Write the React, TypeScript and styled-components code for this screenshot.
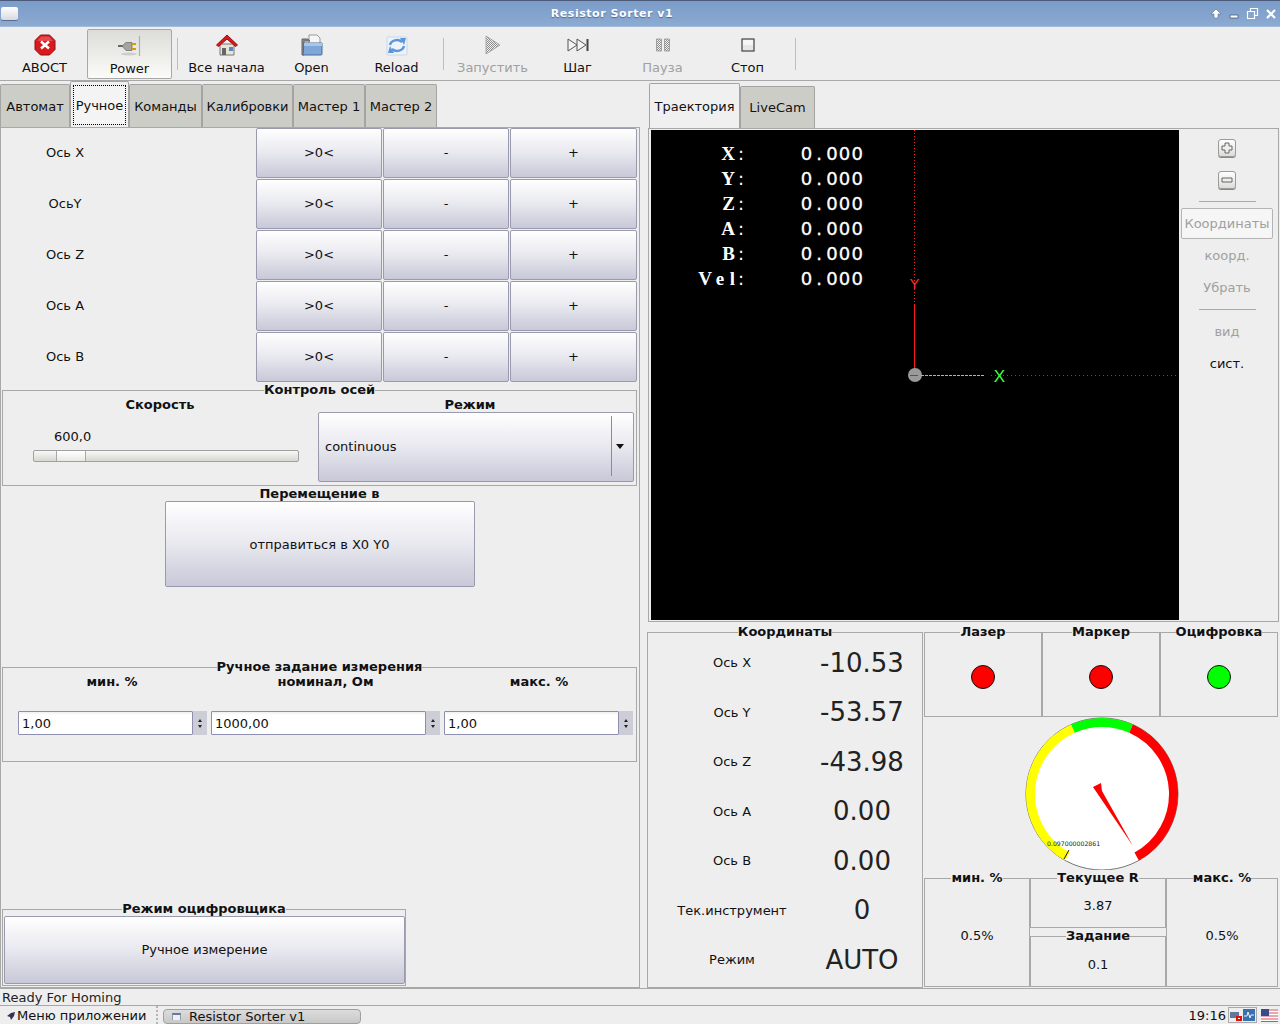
import React from 'react';
import styled, { createGlobalStyle } from 'styled-components';

const GlobalStyle = createGlobalStyle`
  * { box-sizing: border-box; }
  html, body { margin: 0; padding: 0; background: #eeeeee; }
  body { font-family: "DejaVu Sans", sans-serif; font-size: 13px; color: #111; }
  fieldset { margin: 0; min-width: 0; }
`;

const Screen = styled.div`
  width: 1280px;
  height: 1024px;
  display: flex;
  flex-direction: column;
  overflow: hidden;
  background: #eeeeee;
`;

/* ---- title bar ---- */
const TitleBar = styled.div`
  height: 27px;
  flex: none;
  display: flex;
  align-items: center;
  justify-content: space-between;
  padding: 0 3px 0 1px;
  border-top: 1px solid #4a5a78;
  border-bottom: 1px solid #a4bcdc;
  background: linear-gradient(#7b9dc9, #84a4cd 60%, #8dabd2);
`;

const WindowMenu = styled.div`
  width: 17px;
  height: 13px;
  border-radius: 2px;
  background: linear-gradient(#fff, #d8d8e0);
  box-shadow: 0 1px 0 #5a6a88;
`;

const WindowTitle = styled.div`
  font-size: 11px;
  font-weight: 700;
  letter-spacing: 0.55px;
  color: #fff;
  text-shadow: 0 1px 1px #4a6a98;
  margin-right: 4px;
`;

const WindowButtons = styled.div`
  display: flex;
  align-items: center;
  gap: 6px;
`;

/* ---- tool bar ---- */
const ToolBar = styled.div`
  height: 54px;
  flex: none;
  display: flex;
  align-items: center;
  padding-left: 2px;
  border-bottom: 1px solid #a8a8a8;
`;

const ToolButton = styled.div<{ $checked?: boolean; $disabled?: boolean }>`
  width: 85px;
  height: 50px;
  display: flex;
  flex-direction: column;
  align-items: center;
  padding-top: 4px;
  gap: 3px;
  color: ${p => (p.$disabled ? '#a0a0a0' : '#111')};
  ${p =>
    p.$checked
      ? `border: 1px solid #a8a8a8; border-radius: 2px; background: linear-gradient(#dcdcd8, #fbfbf9);`
      : ''}
`;

const ToolIcon = styled.svg`
  width: 24px;
  height: 24px;
  display: block;
`;

const ToolSep = styled.div<{ $left: number }>`
  width: 1px;
  height: 32px;
  background: #bdbdbd;
  margin: 0 6px 0 ${p => p.$left}px;
`;

/* ---- main split ---- */
const Main = styled.div`
  flex: 1;
  display: flex;
  min-height: 0;
`;

const LeftSide = styled.div`
  width: 640px;
  flex: none;
  display: flex;
  flex-direction: column;
`;

const RightSide = styled.div`
  flex: 1;
  display: flex;
  flex-direction: column;
  padding: 2px 0 0 8px;
`;

const TabRow = styled.div`
  height: 46px;
  flex: none;
  display: flex;
  align-items: flex-end;
`;

const RightTabRow = styled(TabRow)`
  height: 45px;
  padding-left: 1px;
`;

const Tab = styled.div<{ $active?: boolean; $w: number }>`
  width: ${p => p.$w}px;
  height: ${p => (p.$active ? '100%' : 'calc(100% - 3px)')};
  display: flex;
  align-items: center;
  justify-content: center;
  border: 1px solid #a4a4a4;
  border-bottom: none;
  border-radius: 2px 2px 0 0;
  background: ${p => (p.$active ? '#f0f0f0' : '#cdcdc8')};
  white-space: nowrap;
`;

const FocusLabel = styled.span`
  outline: 1px dotted #000;
  padding: 12px 2px 11px;
  background: #f4f4f4;
`;

const LeftPane = styled.div`
  flex: 1;
  display: flex;
  flex-direction: column;
  border: 1px solid #a8a8a8;
  min-height: 0;
`;

const AxisRow = styled.div`
  display: grid;
  grid-template-columns: 254px 126px 126px 127px;
  column-gap: 1px;
  height: 50px;
  margin-bottom: 1px;
`;

const AxisLabel = styled.div`
  display: flex;
  align-items: center;
  justify-content: center;
  width: 128px;
  padding-bottom: 2px;
`;

const GradButton = styled.div`
  display: flex;
  align-items: center;
  justify-content: center;
  border: 1px solid #9a9aae;
  border-radius: 2px;
  background: linear-gradient(#ffffff, #e8e8ef 50%, #c8c8d8);
`;

const AxisButton = styled(GradButton)`
  padding-bottom: 2px;
`;

const Group = styled.fieldset<{ $h: number; $w?: number; $plain?: boolean }>`
  height: ${p => p.$h}px;
  ${p => (p.$w ? `width: ${p.$w}px;` : '')}
  padding: 0;
  border: 1px solid ${p => (p.$plain ? 'transparent' : '#a8a8a8')};
  flex: none;
`;

const GroupTitle = styled.legend`
  margin: 0 auto;
  padding: 0;
  font-weight: 700;
  line-height: 16px;
`;

const ControlGroup = styled(Group)`
  margin: 0 2px 0 1px;
`;

const AxisControlGroup = styled(ControlGroup)`
  margin-top: -1px;
`;

const Columns = styled.div`
  display: grid;
  grid-template-columns: 315px 1fr;
  height: 100%;
`;

const ColumnTitle = styled.div<{ $left?: number; $right?: number }>`
  text-align: center;
  font-weight: 700;
  line-height: 14px;
  padding-left: ${p => p.$left || 0}px;
  padding-right: ${p => p.$right || 0}px;
`;

const SpeedColumn = styled.div`
  padding-right: 1px;
`;

const SpeedValue = styled.div`
  margin: 17px 0 6px 51px;
  line-height: 15px;
`;

const Slider = styled.div`
  margin-left: 30px;
  width: 266px;
  height: 12px;
  display: flex;
  border: 1px solid #a0a0a0;
  border-radius: 2px;
  background: linear-gradient(#f8f8f6, #d8d8d2);
`;

const SliderHandle = styled.div`
  margin-left: 22px;
  width: 30px;
  border-left: 1px solid #a8a8a8;
  border-right: 1px solid #a8a8a8;
  background: linear-gradient(#ffffff, #e8e8e4);
`;

const ModeColumn = styled.div`
  padding-right: 2px;
`;

const Combo = styled(GradButton)`
  height: 70px;
  justify-content: space-between;
  padding: 0 0 2px 6px;
`;

const ComboArrow = styled.div`
  width: 22px;
  height: 60px;
  display: flex;
  align-items: center;
  padding-left: 4px;
  border-left: 1px solid #8a8a9a;
  &::after {
    content: '';
    border: 4px solid transparent;
    border-top: 5px solid #111;
    border-bottom: none;
  }
`;

const JogGroup = styled(Group)`
  margin: 0 2px 0 1px;
`;

const JogButton = styled(GradButton)`
  width: 310px;
  height: 86px;
  margin: -1px auto 0;
`;

const Spacer = styled.div<{ $h?: number }>`
  flex: ${p => (p.$h ? 'none' : 1)};
  height: ${p => (p.$h ? `${p.$h}px` : 'auto')};
`;

const ManualGrid = styled.div`
  display: grid;
  grid-template-columns: 206px 233px 1fr;
  height: 100%;
`;

const ManualColumn = styled.div`
  display: flex;
  flex-direction: column;
  gap: 22px;
`;

const Spin = styled.div<{ $left: number; $right: number }>`
  display: flex;
  height: 24px;
  margin: 0 ${p => p.$right}px 0 ${p => p.$left}px;
`;

const SpinField = styled.div`
  flex: 1;
  min-width: 0;
  display: flex;
  align-items: center;
  padding-left: 3px;
  border: 1px solid #8e8eb0;
  border-radius: 1px;
  background: linear-gradient(#f0f0f4, #ffffff 15%);
`;

const SpinArrows = styled.div`
  width: 14px;
  flex: none;
  display: flex;
  flex-direction: column;
  align-items: center;
  justify-content: center;
  gap: 3px;
  background: #cdcdd8;
  &::before {
    content: '';
    border: 2px solid transparent;
    border-bottom: 3px solid #222;
    border-top: none;
  }
  &::after {
    content: '';
    border: 2px solid transparent;
    border-top: 3px solid #222;
    border-bottom: none;
  }
`;

const DigitGroup = styled(Group)`
  margin: 0 0 1px 1px;
`;

const DigitButton = styled(GradButton)`
  height: 68px;
  margin: -1px 0 0 1px;
  padding-bottom: 2px;
`;

/* ---- right: preview ---- */
const PreviewPane = styled.div`
  height: 494px;
  flex: none;
  display: flex;
  padding: 1px 0 1px 2px;
  border: 1px solid #a8a8a8;
  margin-right: 1px;
`;

const Canvas = styled.div`
  position: relative;
  width: 528px;
  background: #000;
  overflow: hidden;
`;

const CanvasDrawing = styled.svg`
  position: absolute;
  inset: 0;
  width: 528px;
  height: 490px;
`;

const Readout = styled.div`
  position: absolute;
  left: 0;
  top: 11px;
  display: grid;
  grid-template-columns: 95px 118px;
  grid-auto-rows: 25px;
  font-size: 18px;
  line-height: 25px;
  color: #fff;
`;

const ReadLabel = styled.span`
  font-family: "Liberation Serif", serif;
  font-size: 19px;
  font-weight: 700;
  letter-spacing: 5.5px;
  text-align: right;
`;

const ReadColon = styled.span`
  font-family: "DejaVu Sans", sans-serif;
  font-size: 18px;
  font-weight: 400;
  letter-spacing: 0;
  margin-left: -2.5px;
  margin-right: 2px;
`;

const ReadValue = styled.span`
  font-family: "DejaVu Sans", sans-serif;
  letter-spacing: 1.15px;
  text-align: right;
  -webkit-text-stroke: 0.3px #fff;
`;

const ReadDot = styled.span`
  padding: 0 3px;
`;

const SidePanel = styled.div`
  flex: 1;
  display: flex;
  flex-direction: column;
  align-items: center;
  padding: 9px 3px 0 0;
`;

const MiniButton = styled.div`
  width: 18px;
  height: 18px;
  margin-bottom: 14px;
  display: flex;
  align-items: center;
  justify-content: center;
  border: 1px solid #9a9a9a;
  border-radius: 3px;
  background: linear-gradient(#fff, #dcdcd8);
  box-shadow: 0 1px 0 #888;
`;

const SideRule = styled.div<{ $before: number; $after: number }>`
  width: 57px;
  height: 1px;
  background: #aaa;
  margin: ${p => p.$before}px 0 ${p => p.$after}px;
  flex: none;
`;

const SideBox = styled.div`
  width: 92px;
  height: 31px;
  flex: none;
  display: flex;
  align-items: center;
  justify-content: center;
  border: 1px solid #b4b4b4;
  border-radius: 2px;
  background: #f6f6f6;
  color: #a0a0a0;
`;

const SideItem = styled.div<{ $off?: boolean }>`
  height: 32px;
  flex: none;
  display: flex;
  align-items: center;
  justify-content: center;
  color: ${p => (p.$off ? '#a0a0a0' : '#111')};
`;

/* ---- right: lower part ---- */
const Lower = styled.div`
  flex: 1;
  display: grid;
  grid-template-columns: 276px 355px;
  column-gap: 1px;
  margin: 2px 0 0 -1px;
`;

const CoordRows = styled.div`
  margin-top: -2px;
`;

const CoordRow = styled.div`
  display: grid;
  grid-template-columns: 168px 92px;
  height: 49.5px;
  align-items: center;
  text-align: center;
`;

const CoordValue = styled.div`
  font-size: 26px;
  color: #222;
  white-space: nowrap;
`;

const GaugeColumn = styled.div`
  display: flex;
  flex-direction: column;
`;

const LedRow = styled.div`
  display: grid;
  grid-template-columns: 118px 118px 118px;
`;

const Led = styled.div<{ $color: string }>`
  width: 24px;
  height: 24px;
  margin: 25px auto 0;
  border-radius: 50%;
  border: 1px solid #111;
  background: ${p => p.$color};
`;

const GaugeBox = styled.svg`
  display: block;
  width: 354px;
  height: 153px;
  flex: none;
`;

const ReadGrid = styled.div`
  display: grid;
  grid-template-columns: 106px 136px 112px;
`;

const SmallValue = styled.div`
  height: 100%;
  display: flex;
  align-items: center;
  justify-content: center;
  padding-bottom: 2px;
`;

const StackValue = styled.div<{ $top: number }>`
  text-align: center;
  padding-top: ${p => p.$top}px;
`;

const Stack = styled.div`
  display: flex;
  flex-direction: column;
`;

/* ---- bottom ---- */
const StatusBar = styled.div`
  height: 18px;
  flex: none;
  display: flex;
  align-items: center;
  padding: 1px 0 0 2px;
  border-bottom: 1px solid #a8a8a8;
  border-top: 1px solid #a8a8a8;
  color: #222;
  line-height: 16px;
`;

const Panel = styled.div`
  height: 18px;
  flex: none;
  display: flex;
  align-items: flex-start;
  overflow: hidden;
  background: #eeeeee;
`;

const MenuLabel = styled.div`
  width: 156px;
  display: flex;
  align-items: center;
  gap: 2px;
  padding: 2px 0 0 7px;
  line-height: 15px;
  white-space: nowrap;
`;

const TaskGrip = styled.div`
  width: 7px;
  height: 18px;
  border-left: 2px dotted #b4b4b4;
`;

const TaskButton = styled.div`
  width: 198px;
  height: 15px;
  margin-top: 3px;
  display: flex;
  align-items: flex-start;
  gap: 8px;
  padding: 0 0 0 8px;
  line-height: 14px;
  overflow: hidden;
  border: 1px solid #a0a0a0;
  border-radius: 4px;
  background: linear-gradient(#dcdcdc, #c8c8c8);
`;

const TaskIcon = styled.div`
  width: 9px;
  height: 7px;
  margin-top: 3px;
  border-top: 2px solid #5a7ab0;
  background: #eef;
  border-left: 1px solid #999;
  border-right: 1px solid #999;
`;

const Tray = styled.div`
  margin-left: auto;
  display: flex;
  align-items: center;
  height: 18px;
  padding-right: 2px;
`;

const Clock = styled.div`
  font-size: 13px;
  margin-right: 2px;
`;

const TrayIcons = styled.div`
  display: flex;
  gap: 1px;
  padding: 1px;
  border: 1px solid #aaa;
  margin-right: 4px;
`;

const TrayGlyph = styled.svg`
  display: block;
  width: 12px;
  height: 12px;
`;

const FlagGlyph = styled.svg`
  display: block;
  width: 17px;
  height: 13px;
`;

const tools = [
  { key: 'abort', label: 'АВОСТ' },
  { key: 'power', label: 'Power', checked: true },
  { key: 'sep', left: 5 },
  { key: 'home', label: 'Все начала' },
  { key: 'open', label: 'Open' },
  { key: 'reload', label: 'Reload' },
  { key: 'sep', left: 4 },
  { key: 'run', label: 'Запустить', disabled: true },
  { key: 'step', label: 'Шаг' },
  { key: 'pause', label: 'Пауза', disabled: true },
  { key: 'stop', label: 'Стоп' },
  { key: 'sep', left: 5 },
];

const Dither = ({ id }: { id: string }) => (
  <defs>
    <pattern id={id} width="2" height="2" patternUnits="userSpaceOnUse">
      <rect width="2" height="2" fill="#f0f0f0" />
      <rect width="1" height="1" fill="#8c8c8c" />
      <rect x="1" y="1" width="1" height="1" fill="#8c8c8c" />
    </pattern>
  </defs>
);

const Icon = ({ name }: { name: string }) => {
  switch (name) {
    case 'abort':
      return (
        <ToolIcon viewBox="0 0 24 24">
          <path d="M7.5 2h9L22 7.5v9L16.5 22h-9L2 16.5v-9z" fill="#d9191c" stroke="#8e1012" />
          <path d="M4 8l4-4.5h8L20 8z" fill="#f0686a" opacity="0.6" />
          <path d="M8 8.5l8 7M16 8.5l-8 7" stroke="#fff" strokeWidth="2.6" />
        </ToolIcon>
      );
    case 'power':
      return (
        <ToolIcon viewBox="0 0 24 24">
          <ellipse cx="11" cy="20" rx="8" ry="1.5" fill="#ccc" />
          <path d="M0 12h5" stroke="#666" strokeWidth="2" />
          <path d="M4 12l4-3.5h6v8H8z" fill="#a4a4a0" stroke="#666" strokeWidth="0.7" />
          <path d="M14 10h4M14 15h4" stroke="#d0a000" strokeWidth="2" />
          <path d="M21.5 2v20" stroke="#b0b0a8" strokeWidth="1.2" />
        </ToolIcon>
      );
    case 'home':
      return (
        <ToolIcon viewBox="0 0 24 24">
          <path d="M5 11h14v11H5z" fill="#e8e4d8" stroke="#777" />
          <path d="M7 15h4v7H7z" fill="#666" />
          <path d="M14 14h4v4h-4z" fill="#5f84b8" />
          <path d="M1.5 12L12 2l10.5 10-2 1.5L12 6l-8.5 7.5z" fill="#d8191c" stroke="#981012" />
        </ToolIcon>
      );
    case 'open':
      return (
        <ToolIcon viewBox="0 0 24 24">
          <path d="M9 2h8l3 3v7H9z" fill="#f6f6f6" stroke="#999" />
          <path d="M2 6h6l2 2h-6v14H2z" fill="#8a8a90" stroke="#666" />
          <path d="M4 10h18v11a1 1 0 0 1-1 1H3z" fill="#7ea6d8" stroke="#4a6a98" />
          <path d="M4 10h18v3H4z" fill="#a8c6e8" />
        </ToolIcon>
      );
    case 'reload':
      return (
        <ToolIcon viewBox="0 0 24 24">
          <rect x="2" y="4" width="20" height="18" rx="1" fill="#eef3fa" stroke="#c8d6e8" />
          <path d="M5 12a7 6 0 0 1 12-3" fill="none" stroke="#5a96d8" strokeWidth="2.4" />
          <path d="M15 5l6 0-2 7z" fill="#5a96d8" />
          <path d="M19 13a7 6 0 0 1-12 3" fill="none" stroke="#5a96d8" strokeWidth="2.4" />
          <path d="M9 20l-6 0 2-7z" fill="#5a96d8" />
        </ToolIcon>
      );
    case 'run':
      return (
        <ToolIcon viewBox="0 0 24 24">
          <Dither id="dither-run" />
          <path d="M5 3l14 9-14 9z" fill="url(#dither-run)" stroke="#a8a8a8" />
        </ToolIcon>
      );
    case 'step':
      return (
        <ToolIcon viewBox="0 0 24 24">
          <path d="M2 6l9 6-9 6zM11 6l9 6-9 6z" fill="#f4f4f4" stroke="#555" />
          <path d="M21.5 6v12" stroke="#444" strokeWidth="2" />
        </ToolIcon>
      );
    case 'pause':
      return (
        <ToolIcon viewBox="0 0 24 24">
          <Dither id="dither-pause" />
          <path d="M5.5 6h5v12h-5zM13.5 6h5v12h-5z" fill="url(#dither-pause)" stroke="#a0a0a0" />
        </ToolIcon>
      );
    case 'stop':
      return (
        <ToolIcon viewBox="0 0 24 24">
          <rect x="6" y="6" width="12" height="12" fill="#e6e6e2" stroke="#444" strokeWidth="1.2" />
          <rect x="7" y="7" width="10" height="5" fill="#f6f6f6" />
        </ToolIcon>
      );
    default:
      return null;
  }
};

const axes = ['Ось X', 'ОсьY', 'Ось Z', 'Ось A', 'Ось B'];
const readout = ['X', 'Y', 'Z', 'A', 'B', 'Vel'];
const coords = [
  ['Ось X', '-10.53'],
  ['Ось Y', '-53.57'],
  ['Ось Z', '-43.98'],
  ['Ось A', '0.00'],
  ['Ось B', '0.00'],
  ['Тек.инструмент', '0'],
  ['Режим', 'AUTO'],
];
const leds = [
  ['Лазер', '#ff0000'],
  ['Маркер', '#ff0000'],
  ['Оцифровка', '#00ff00'],
];

const arc = (cx: number, cy: number, r: number, from: number, to: number) => {
  const pt = (a: number) => {
    const t = (a * Math.PI) / 180;
    return `${(cx + r * Math.sin(t)).toFixed(2)} ${(cy - r * Math.cos(t)).toFixed(2)}`;
  };
  return `M${pt(from)} A${r} ${r} 0 ${to - from > 180 ? 1 : 0} 1 ${pt(to)}`;
};

const Gauge = () => (
  <GaugeBox viewBox="0 0 354 153">
    <circle cx="178" cy="77" r="76" fill="#fff" stroke="#777" strokeWidth="1" />
    <path d={arc(178, 77, 71.5, -151, -24)} fill="none" stroke="#ffff00" strokeWidth="9" />
    <path d={arc(178, 77, 71.5, -24, 24)} fill="none" stroke="#00ff00" strokeWidth="9" />
    <path d={arc(178, 77, 71.5, 24, 151)} fill="none" stroke="#ff0000" strokeWidth="9" />
    <path d="M140 142l5-9" stroke="#111" strokeWidth="1" />
    <text x="123" y="129" fontSize="6.2" fontFamily="DejaVu Sans" fill="#222">0.097000002861</text>
    <path d="M169 70l8-4 1 8 31 55z" fill="#ff0000" />
  </GaugeBox>
);

export default function App() {
  return (
    <Screen>
      <GlobalStyle />
      <TitleBar>
        <WindowMenu />
        <WindowTitle>Resistor Sorter v1</WindowTitle>
        <WindowButtons>
          <svg width="12" height="12" viewBox="0 0 12 12">
            <path d="M6 1l5 5H8v4H4V6H1z" fill="#fff" stroke="#5a6a88" strokeWidth="0.6" />
          </svg>
          <svg width="12" height="12" viewBox="0 0 12 12">
            <path d="M2 7h8v3H2z" fill="#fff" stroke="#4a5a78" strokeWidth="0.8" />
          </svg>
          <svg width="13" height="13" viewBox="0 0 13 13">
            <path d="M4.5 1.5h7v7h-7z" fill="none" stroke="#fff" strokeWidth="1.2" />
            <path d="M1.5 4.5h7v7h-7z" fill="#84a4cd" stroke="#fff" strokeWidth="1.2" />
          </svg>
          <svg width="12" height="12" viewBox="0 0 12 12">
            <path d="M2 2l8 8M10 2l-8 8" stroke="#fff" strokeWidth="2.2" />
          </svg>
        </WindowButtons>
      </TitleBar>

      <ToolBar>
        {tools.map((t, i) =>
          t.key === 'sep' ? (
            <ToolSep key={i} $left={t.left || 0} />
          ) : (
            <ToolButton key={i} $checked={t.checked} $disabled={t.disabled}>
              <Icon name={t.key} />
              {t.label}
            </ToolButton>
          ),
        )}
      </ToolBar>

      <Main>
        <LeftSide>
          <TabRow>
            <Tab $w={70}>Автомат</Tab>
            <Tab $w={59} $active>
              <FocusLabel>Ручное</FocusLabel>
            </Tab>
            <Tab $w={73}>Команды</Tab>
            <Tab $w={91}>Калибровки</Tab>
            <Tab $w={72}>Мастер 1</Tab>
            <Tab $w={72}>Мастер 2</Tab>
          </TabRow>
          <LeftPane>
            {axes.map(a => (
              <AxisRow key={a}>
                <AxisLabel>{a}</AxisLabel>
                <AxisButton>&gt;0&lt;</AxisButton>
                <AxisButton>-</AxisButton>
                <AxisButton>+</AxisButton>
              </AxisRow>
            ))}

            <AxisControlGroup $h={104}>
              <GroupTitle>Контроль осей</GroupTitle>
              <Columns>
                <SpeedColumn>
                  <ColumnTitle>Скорость</ColumnTitle>
                  <SpeedValue>600,0</SpeedValue>
                  <Slider>
                    <SliderHandle />
                  </Slider>
                </SpeedColumn>
                <ModeColumn>
                  <ColumnTitle $right={12}>Режим</ColumnTitle>
                  <Combo>
                    continuous
                    <ComboArrow />
                  </Combo>
                </ModeColumn>
              </Columns>
            </AxisControlGroup>

            <JogGroup $h={103} $plain>
              <GroupTitle>Перемещение в</GroupTitle>
              <JogButton>отправиться в X0 Y0</JogButton>
            </JogGroup>

            <Spacer $h={70} />

            <ControlGroup $h={103}>
              <GroupTitle>Ручное задание измерения</GroupTitle>
              <ManualGrid>
                <ManualColumn>
                  <ColumnTitle $left={12}>мин. %</ColumnTitle>
                  <Spin $left={15} $right={2}>
                    <SpinField>1,00</SpinField>
                    <SpinArrows />
                  </Spin>
                </ManualColumn>
                <ManualColumn>
                  <ColumnTitle>номинал, Ом</ColumnTitle>
                  <Spin $left={2} $right={2}>
                    <SpinField>1000,00</SpinField>
                    <SpinArrows />
                  </Spin>
                </ManualColumn>
                <ManualColumn>
                  <ColumnTitle>макс. %</ColumnTitle>
                  <Spin $left={2} $right={3}>
                    <SpinField>1,00</SpinField>
                    <SpinArrows />
                  </Spin>
                </ManualColumn>
              </ManualGrid>
            </ControlGroup>

            <Spacer />

            <DigitGroup $h={85} $w={404}>
              <GroupTitle>Режим оцифровщика</GroupTitle>
              <DigitButton>Ручное измерение</DigitButton>
            </DigitGroup>
          </LeftPane>
        </LeftSide>

        <RightSide>
          <RightTabRow>
            <Tab $w={91} $active>
              Траектория
            </Tab>
            <Tab $w={75}>LiveCam</Tab>
          </RightTabRow>
          <PreviewPane>
            <Canvas>
              <CanvasDrawing viewBox="0 0 528 490">
                <path d="M263.5 0v175" stroke="#ff2020" strokeDasharray="1 2" />
                <path d="M263.5 175v70" stroke="#ff1818" strokeWidth="1" />
                <path d="M340 245.5h188" stroke="#d02020" strokeDasharray="1 3" />
                <circle cx="264" cy="245" r="7" fill="#9a9a9a" />
                <path d="M270 245.5h64" stroke="#40ff40" strokeDasharray="3 1" />
                <path d="M259 245.5h8" stroke="#4040ff" />
                <text x="263.5" y="159" fontSize="15" fontFamily="Liberation Sans" fill="#ff3030" textAnchor="middle">Y</text>
                <text x="348.5" y="251.5" fontSize="17" fontFamily="Liberation Sans" fill="#40ff40" textAnchor="middle">X</text>
              </CanvasDrawing>
              <Readout>
                {readout.map(l => (
                  <React.Fragment key={l}>
                    <ReadLabel>
                      {l}
                      <ReadColon>:</ReadColon>
                    </ReadLabel>
                    <ReadValue>
                      0<ReadDot>.</ReadDot>000
                    </ReadValue>
                  </React.Fragment>
                ))}
              </Readout>
            </Canvas>
            <SidePanel>
              <MiniButton>
                <svg width="12" height="12" viewBox="0 0 12 12">
                  <path d="M4 1h4v3h3v4H8v3H4V8H1V4h3z" fill="#eee" stroke="#666" />
                </svg>
              </MiniButton>
              <MiniButton>
                <svg width="12" height="12" viewBox="0 0 12 12">
                  <path d="M1 4h10v4H1z" fill="#eee" stroke="#666" />
                </svg>
              </MiniButton>
              <SideRule $before={-2} $after={6} />
              <SideBox>Координаты</SideBox>
              <SideItem $off>коорд.</SideItem>
              <SideItem $off>Убрать</SideItem>
              <SideRule $before={6} $after={5} />
              <SideItem $off>вид</SideItem>
              <SideItem>сист.</SideItem>
            </SidePanel>
          </PreviewPane>

          <Lower>
            <Group $h={364}>
              <GroupTitle>Координаты</GroupTitle>
              <CoordRows>
                {coords.map(([l, v]) => (
                  <CoordRow key={l}>
                    <div>{l}</div>
                    <CoordValue>{v}</CoordValue>
                  </CoordRow>
                ))}
              </CoordRows>
            </Group>
            <GaugeColumn>
              <LedRow>
                {leds.map(([name, color]) => (
                  <Group key={name} $h={93}>
                    <GroupTitle>{name}</GroupTitle>
                    <Led $color={color} />
                  </Group>
                ))}
              </LedRow>
              <Gauge />
              <ReadGrid>
                <Group $h={117}>
                  <GroupTitle>мин. %</GroupTitle>
                  <SmallValue>0.5%</SmallValue>
                </Group>
                <Stack>
                  <Group $h={58}>
                    <GroupTitle>Текущее R</GroupTitle>
                    <StackValue $top={12}>3.87</StackValue>
                  </Group>
                  <Group $h={59}>
                    <GroupTitle>Задание</GroupTitle>
                    <StackValue $top={13}>0.1</StackValue>
                  </Group>
                </Stack>
                <Group $h={117}>
                  <GroupTitle>макс. %</GroupTitle>
                  <SmallValue>0.5%</SmallValue>
                </Group>
              </ReadGrid>
            </GaugeColumn>
          </Lower>
        </RightSide>
      </Main>

      <StatusBar>Ready For Homing</StatusBar>
      <Panel>
        <MenuLabel>
          <svg width="8" height="8" viewBox="0 0 8 8">
            <path d="M0 4l4-3 4-1-1 4-3 4-1-3z" fill="#335" />
          </svg>
          Меню приложении
        </MenuLabel>
        <TaskGrip />
        <TaskButton>
          <TaskIcon />
          Resistor Sorter v1
        </TaskButton>
        <Tray>
          <Clock>19:16</Clock>
          <TrayIcons>
            <TrayGlyph viewBox="0 0 12 12">
              <path d="M0 3h9v6H0z" fill="#5a7a9a" />
              <path d="M6 7h6v5H6z" fill="#e01010" />
              <path d="M8 9h2v1H8z" fill="#fff" />
            </TrayGlyph>
            <TrayGlyph viewBox="0 0 12 12">
              <rect width="12" height="12" fill="#3a70b0" />
              <path d="M1 7h3l1-4 2 6 1-3h3" fill="none" stroke="#eee" />
            </TrayGlyph>
          </TrayIcons>
          <FlagGlyph viewBox="0 0 17 13">
            <rect width="17" height="13" fill="#fff" />
            <path d="M0 1h17M0 4h17M0 7h17M0 10h17M0 12.5h17" stroke="#d05060" />
            <rect width="8" height="7" fill="#3a4a8a" />
          </FlagGlyph>
        </Tray>
      </Panel>
    </Screen>
  );
}
